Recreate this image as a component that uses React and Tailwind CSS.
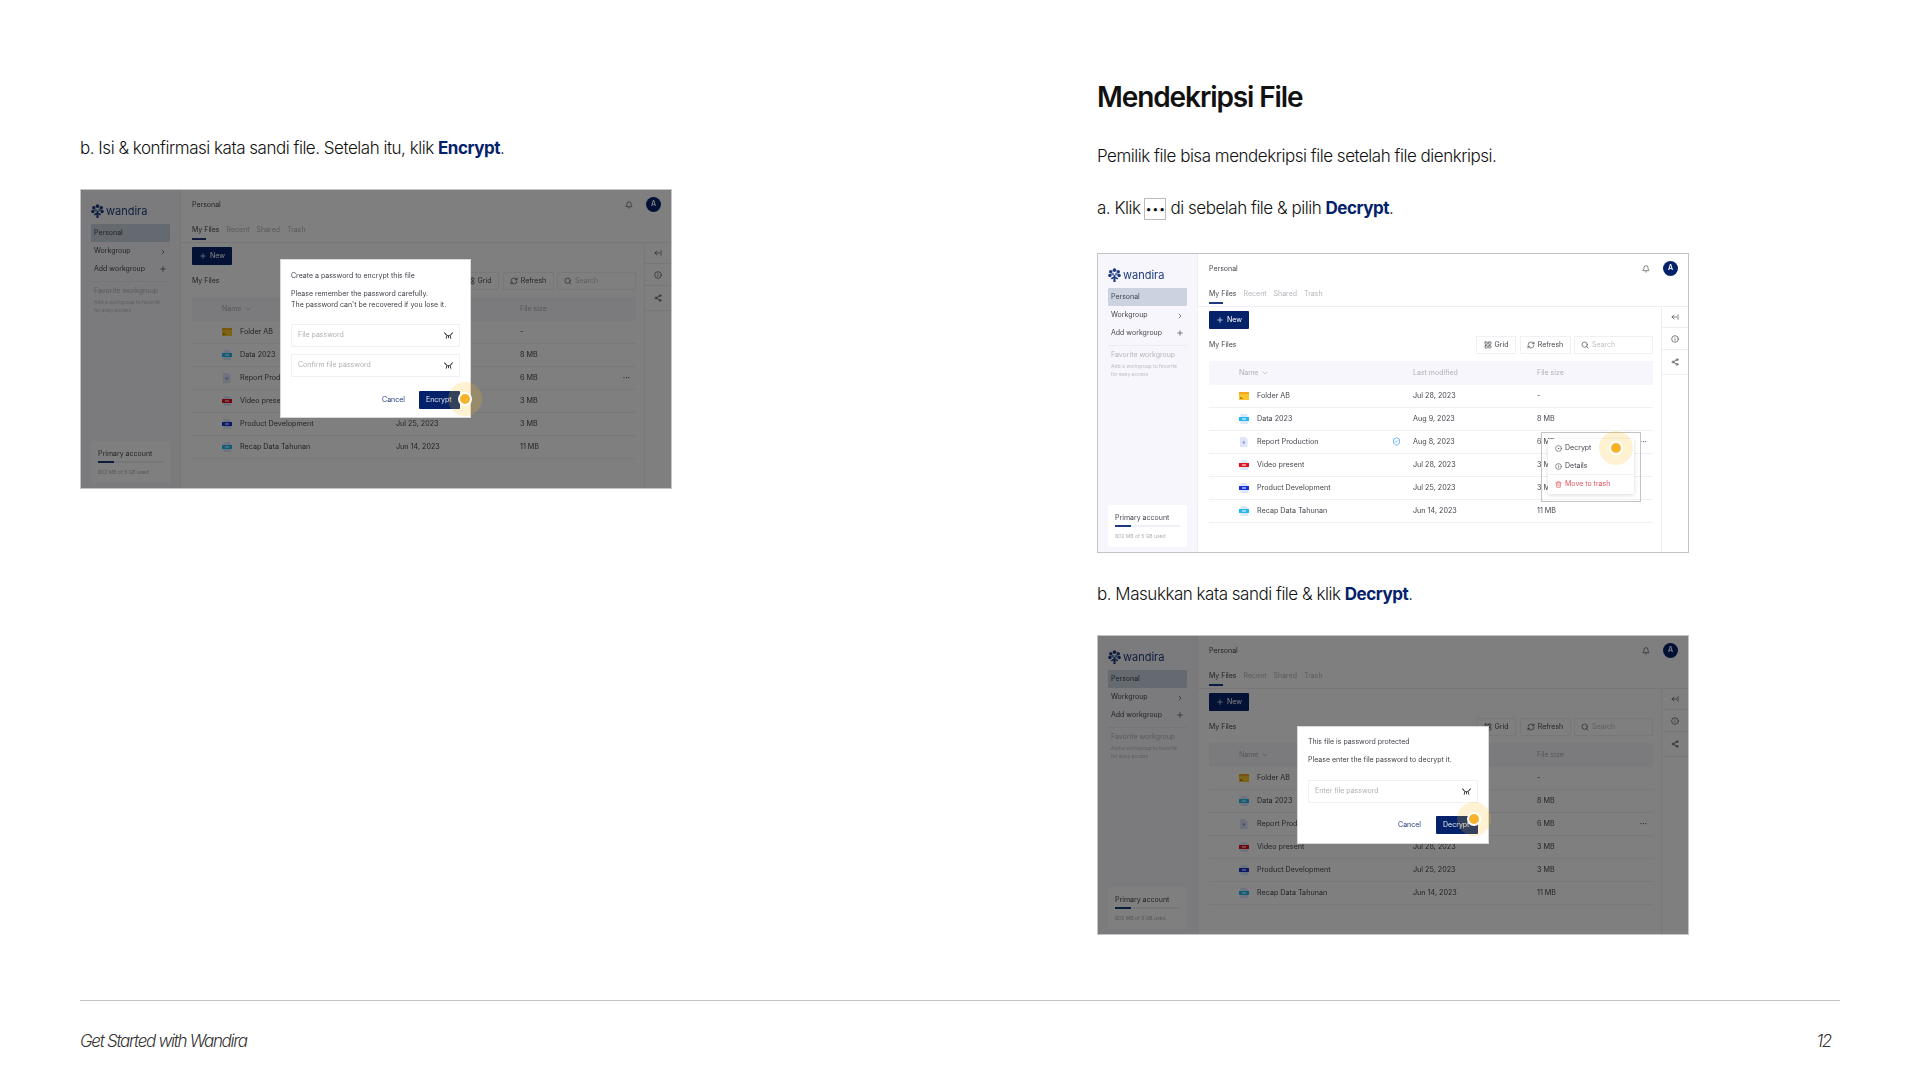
import React from 'react';
import {
  ArrowLeftFromLine, Bell, ChevronDown, ChevronRight, CircleDot, Info, LayoutGrid,
  Plus, RefreshCw, Search, Share2, ShieldCheck, Trash2,
} from 'lucide-react';

const files = [
  { name: 'Folder AB', date: 'Jul 28, 2023', size: '-', icon: 'folder' },
  { name: 'Data 2023', date: 'Aug 9, 2023', size: '8 MB', icon: '#22b8f0' },
  { name: 'Report Production', date: 'Aug 8, 2023', size: '6 MB', icon: 'doc', shield: true, more: true },
  { name: 'Video present', date: 'Jul 28, 2023', size: '3 MB', icon: '#e5101f' },
  { name: 'Product Development', date: 'Jul 25, 2023', size: '3 MB', icon: '#1733d6' },
  { name: 'Recap Data Tahunan', date: 'Jun 14, 2023', size: '11 MB', icon: '#22b8f0' },
];

const WandiraLogo = () => (
  <svg viewBox="0 0 24 28" className="w-[13px] h-[15px]" fill="#1e3a7b">
    <circle cx="12" cy="4" r="3.4" />
    <circle cx="5" cy="7" r="3.2" />
    <circle cx="19" cy="7" r="3.2" />
    <circle cx="3.4" cy="14" r="3.2" />
    <circle cx="20.6" cy="14" r="3.2" />
    <circle cx="8.5" cy="11.5" r="2.6" fill="#5b7ab5" />
    <circle cx="15.5" cy="11.5" r="2.6" fill="#5b7ab5" />
    <path d="M10.5 13h3l.6 13h-4.2zM5 19l5.5-3v3l-3.500 2.500zM19 19l-5.500-3v3l3.500 2.500z" />
  </svg>
);

const EyeClosed = () => (
  <svg viewBox="0 0 16 12" className="w-[9px] h-[7px]" fill="none" stroke="#222" strokeWidth="1.6" strokeLinecap="round">
    <path d="M2 3c3 4.600 9 4.600 12 0" />
    <path d="M1 1l2.500 3M15 1l-2.500 3M5 6.500 4 11M11 6.500 12 11M8 7v3" />
  </svg>
);

const FileIcon = ({ kind }) => {
  if (kind === 'folder') {
    return (
      <svg viewBox="0 0 20 16" className="w-[10px] h-[8px]">
        <rect width="20" height="16" fill="#fbc62c" />
        <rect width="20" height="4" fill="#f5a623" />
        <rect x="2" y="10" width="3" height="4" fill="#a67c1a" />
        <rect x="6" y="12" width="2" height="2" fill="#a67c1a" />
      </svg>
    );
  }
  if (kind === 'doc') {
    return (
      <svg viewBox="0 0 18 20" className="w-[9px] h-[10px]">
        <path d="M2 0h10l5 5v15H2z" fill="#dfe4f8" />
        <circle cx="9.500" cy="11" r="2.500" fill="#8d9fe0" />
      </svg>
    );
  }
  return (
    <svg viewBox="0 0 20 20" className="w-[10px] h-[10px]">
      <path d="M3 0h11l4 4v16H3z" fill="#dbe8fb" />
      <rect y="6" width="20" height="8" fill={kind} />
      <rect x="6" y="9" width="8" height="2" fill="#fff" />
    </svg>
  );
};

const Tap = ({ className }) => (
  <div className={`absolute w-[34px] h-[34px] rounded-full bg-[#fbbf24]/20 flex items-center justify-center ${className}`}>
    <div className="w-[10px] h-[10px] rounded-full bg-[#f7b22b] border-2 border-white box-content" />
  </div>
);

const PasswordField = ({ placeholder }) => (
  <div className="h-[23px] border border-[#f0f0f4] flex items-center justify-between pl-[6px] pr-[6px] text-[#b0b0b6]">
    <span>{placeholder}</span>
    <EyeClosed />
  </div>
);

const EncryptDialog = () => (
  <div className="absolute left-[199px] top-[69px] w-[191px] h-[159px] bg-white border border-[#d8d8d8] px-[10px] text-[7px] text-[#3c3f46] z-20">
    <p className="mt-[12px] leading-[8px]">Create a password to encrypt this file</p>
    <p className="mt-[8px] leading-[11px]">Please remember the password carefully.<br />The password can't be recovered if you lose it.</p>
    <div className="mt-[14px] flex flex-col gap-[7px]">
      <PasswordField placeholder="File password" />
      <PasswordField placeholder="Confirm file password" />
    </div>
    <div className="mt-[14px] flex items-center justify-end gap-[14px]">
      <span className="text-[#1e3a7b]">Cancel</span>
      <div className="w-[41px] h-[18px] bg-[#04226a] rounded-[1px] text-[#e6e9f2] flex items-center pl-[7px]">Encrypt</div>
    </div>
    <Tap className="left-[167px] top-[122px]" />
  </div>
);

const DecryptDialog = () => (
  <div className="absolute left-[199px] top-[90px] w-[192px] h-[118px] bg-white border border-[#d8d8d8] px-[10px] text-[7px] text-[#3c3f46] z-20">
    <p className="mt-[11px] leading-[8px]">This file is password protected</p>
    <p className="mt-[10px] leading-[8px]">Please enter the file password to decrypt it.</p>
    <div className="mt-[16px]">
      <PasswordField placeholder="Enter file password" />
    </div>
    <div className="mt-[13px] flex items-center justify-end gap-[15px]">
      <span className="text-[#1e3a7b]">Cancel</span>
      <div className="w-[42px] h-[18px] bg-[#04226a] rounded-[1px] text-[#e6e9f2] flex items-center pl-[7px]">Decrypt</div>
    </div>
    <Tap className="left-[159px] top-[75px]" />
  </div>
);

const RowMenu = () => (
  <div className="absolute left-[443px] top-[178px] w-[100px] h-[70px] border border-[#c4c4c4] z-10">
    <div className="ml-[6px] mt-[6px] w-[86px] h-[55px] bg-white shadow-[0_1px_4px_rgba(0,0,0,0.15)] text-[7px] text-[#44474e]">
      <div className="h-[19px] flex items-center gap-[3px] pl-[7px]"><CircleDot size={7} />Decrypt</div>
      <div className="h-[17px] flex items-center gap-[3px] pl-[7px] border-b border-[#f2f2f5]"><Info size={7} />Details</div>
      <div className="h-[19px] flex items-center gap-[3px] pl-[7px] text-[#e2525c]"><Trash2 size={7} />Move to trash</div>
    </div>
    <Tap className="left-[57px] top-[-2px]" />
  </div>
);

const AppShot = ({ dialog, menu }) => (
  <div className="relative w-[592px] h-[300px] border border-[#c4c4c4] bg-white flex font-['Inter',sans-serif] text-[#44474e] text-[7px] blur-[0.3px]">
    <aside className="w-[100px] border-r border-[#eeeef4] bg-[#f6f6fc] px-[10px] flex flex-col">
      <div className="h-[34px] flex items-center gap-[2px] pt-[8px]">
        <WandiraLogo />
        <span className="text-[11px] text-[#1e3a7b]">wandira</span>
      </div>
      <div className="h-[18px] rounded-[1px] bg-[#cbd2e0] flex items-center pl-[3px] text-[7px]">Personal</div>
      <div className="h-[17px] mt-[1px] flex items-center justify-between px-[3px] text-[7px]">Workgroup<ChevronRight size={8} /></div>
      <div className="h-[18px] flex items-center justify-between px-[3px] text-[7px]">Add workgroup<Plus size={8} /></div>
      <div className="mt-[3px] pt-[4px] border-t border-[#ebebf1] px-[3px]">
        <p className="text-[7px] leading-[9px] text-[#b5b5bc]">Favorite workgroup</p>
        <p className="mt-[3px] text-[5px] leading-[8px] text-[#bdbdc4]">Add a workgroup to favorite<br />for easy access</p>
      </div>
      <div className="mt-auto mb-[5px] h-[42px] bg-white rounded-[1px] px-[7px] pt-[8px]">
        <p className="text-[7px] leading-[9px]">Primary account</p>
        <div className="mt-[3px] h-[2px] bg-[#eef0f6]"><div className="w-[16px] h-[2px] bg-[#1e3a7b]" /></div>
        <p className="mt-[6px] text-[5px] leading-[6px] text-[#b0b0b8]">802 MB of 5 GB used</p>
      </div>
    </aside>

    <main className="flex-1 flex flex-col min-w-0">
      <header className="h-[53px] border-b border-[#eeeef4] pl-[11px] pr-[10px] relative">
        <div className="flex items-center justify-between h-[30px]">
          <span className="text-[7px]">Personal</span>
          <div className="flex items-center gap-[13px] mb-[1px]">
            <Bell size={8} />
            <div className="w-[15px] h-[15px] rounded-full bg-[#04226a] text-white text-[7px] font-semibold flex items-center justify-center">A</div>
          </div>
        </div>
        <div className="flex gap-[7px] mt-[5px] text-[7px] text-[#b5b5bc]">
          <span className="relative text-[#44474e] h-[17px]">My Files<span className="absolute left-0 top-[13px] w-[14px] h-[2px] bg-[#1e3a7b]" /></span>
          <span>Recent</span>
          <span>Shared</span>
          <span>Trash</span>
        </div>
      </header>
      <div className="flex-1 flex min-h-0">
        <section className="w-[463px] pl-[11px] pr-[8px] pt-[4px]">
          <div className="w-[40px] h-[18px] rounded-[1px] bg-[#04226a] text-white text-[7px] flex items-center justify-center gap-[3px]"><Plus size={8} />New</div>
          <div className="mt-[7px] h-[18px] flex items-center justify-between text-[7px]">
            <span>My Files</span>
            <div className="flex gap-[3.500px] h-full">
              <div className="w-[40px] border border-[#f0f0f4] flex items-center justify-center gap-[3px]"><LayoutGrid size={8} />Grid</div>
              <div className="w-[51px] border border-[#f0f0f4] flex items-center justify-center gap-[3px]"><RefreshCw size={8} />Refresh</div>
              <div className="w-[79px] border border-[#f0f0f4] flex items-center gap-[3px] pl-[6px] text-[#c0c0c6]"><Search size={8} className="text-[#44474e]" />Search</div>
            </div>
          </div>
          <div className="mt-[7px] h-[24px] bg-[#f6f6fc] flex items-center text-[7px] text-[#b0b0b8]">
            <div className="w-[204px] pl-[30px] flex items-center gap-[3px]">Name<ChevronDown size={8} /></div>
            <div className="w-[124px]">Last modified</div>
            <div>File size</div>
          </div>
          {files.map((f) => (
            <div key={f.name} className="h-[23px] border-b border-[#f0f0f4] flex items-center text-[7.200px]">
              <div className="w-[204px] pl-[30px] pr-[12px] flex items-center">
                <span className="w-[18px] flex"><FileIcon kind={f.icon} /></span>
                <span>{f.name}</span>
                {f.shield && <ShieldCheck size={9} className="ml-auto text-[#3f9cf2]" />}
              </div>
              <div className="w-[124px]">{f.date}</div>
              <div className="flex-1 flex items-center justify-between pr-[6px]">
                <span>{f.size}</span>
                {f.more && <span className="leading-[6px] font-bold">···</span>}
              </div>
            </div>
          ))}
        </section>
        <div className="ml-auto w-[27px] border-l border-[#eeeef4]">
          <div className="h-[21px] border-b border-[#eeeef4] flex items-center justify-center"><ArrowLeftFromLine size={8} /></div>
          <div className="h-[22px] border-b border-[#eeeef4] flex items-center justify-center"><Info size={8} /></div>
          <div className="h-[25px] border-b border-[#eeeef4] flex items-center justify-center"><Share2 size={8} /></div>
        </div>
      </div>
    </main>

    {dialog && <div className="absolute inset-0 bg-black/50" />}
    {dialog === 'encrypt' && <EncryptDialog />}
    {dialog === 'decrypt' && <DecryptDialog />}
    {menu && <RowMenu />}
  </div>
);

const Accent = ({ children }) => <strong className="font-bold text-[#04226a]">{children}</strong>;

export default function App() {
  return (
    <div className="w-[1920px] h-[1080px] bg-white px-[80px] flex flex-col font-['Inter',sans-serif] text-[#111]">
      <div className="h-[1000px] flex">
        <div className="w-[1017px] pt-[134px]">
          <p className="text-[17px] font-light leading-[28px] tracking-[-0.48px]">b. Isi &amp; konfirmasi kata sandi file. Setelah itu, klik <Accent>Encrypt</Accent>.</p>
          <div className="mt-[27px]"><AppShot dialog="encrypt" /></div>
        </div>
        <div className="pt-[77px]">
          <h1 className="text-[28px] leading-[40px] font-semibold tracking-[-1.1px] text-[#111]">Mendekripsi File</h1>
          <p className="mt-[25px] text-[17px] font-light leading-[28px] tracking-[-0.48px]">Pemilik file bisa mendekripsi file setelah file dienkripsi.</p>
          <p className="mt-[24px] text-[17px] font-light leading-[28px] tracking-[-0.48px] flex items-center gap-[4px] whitespace-pre">
            a. Klik
            <span className="w-[22px] h-[22px] border border-[#bbb] flex items-center justify-center text-[12px] tracking-[0px] leading-none mt-[2px]">•••</span>
            <span>di sebelah file &amp; pilih <Accent>Decrypt</Accent>.</span>
          </p>
          <div className="mt-[31px]"><AppShot menu /></div>
          <p className="mt-[27px] text-[17px] font-light leading-[28px] tracking-[-0.48px]">b. Masukkan kata sandi file &amp; klik <Accent>Decrypt</Accent>.</p>
          <div className="mt-[27px]"><AppShot dialog="decrypt" /></div>
        </div>
      </div>
      <footer className="border-t border-[#c4c4c4] flex-1 flex items-start justify-between pt-[30px] pr-[9px] text-[17px] italic font-light text-[#333] tracking-[-1.3px]">
        <span className="leading-[20px]">Get Started with Wandira</span>
        <span className="leading-[20px]">12</span>
      </footer>
    </div>
  );
}
